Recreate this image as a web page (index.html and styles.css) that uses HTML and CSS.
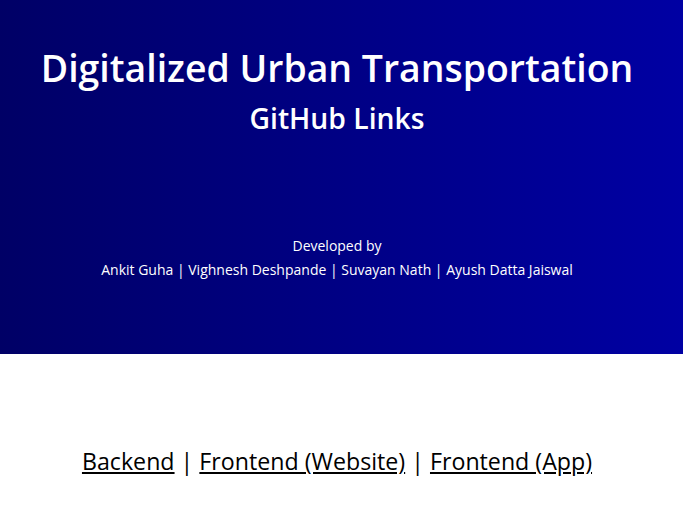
FILE: index.html
```html
<!DOCTYPE html>
<html>
<head>
<meta charset="utf-8">
<link rel="stylesheet" href="styles.css">
</head>
<body>
<header class="hero">
  <h1 class="title">Digitalized Urban Transportation</h1>
  <h2 class="subtitle">GitHub Links</h2>
  <div class="credits">
    <p>Developed by</p>
    <p>Ankit Guha | Vighnesh Deshpande | Suvayan Nath | Ayush Datta Jaiswal</p>
  </div>
</header>
<main class="links">
  <a href="#">Backend</a> <span class="sep">|</span> <a href="#">Frontend (Website)</a> <span class="sep">|</span> <a href="#">Frontend (App)</a>
</main>
</body>
</html>
```
FILE: styles.css
```css
html, body {
  margin: 0;
  padding: 0;
  background: #fff;
  font-family: "Open Sans", "Noto Sans", sans-serif;
}
.hero {
  height: 354px;
  background: linear-gradient(to right, #000066, #0000a3);
  color: #fff;
  text-align: center;
  display: flex;
  flex-direction: column;
  align-items: center;
  padding: 44px 9px 0 0;
  box-sizing: border-box;
}
.title {
  margin: 0;
  font-size: 37.4px;
  font-weight: 600;
  line-height: 48px;
}
.subtitle {
  margin: 8px 0 0;
  font-size: 28.3px;
  font-weight: 600;
  line-height: 36px;
}
.credits {
  margin-top: 98px;
  font-size: 14px;
  line-height: 24px;
}
.credits p {
  margin: 0;
}
.links {
  text-align: center;
  padding: 91px 9px 0 0;
  font-size: 23.2px;
  color: #000;
}
.links a {
  color: #000;
  text-decoration: underline;
}
.sep {
  color: #000;
}
```
